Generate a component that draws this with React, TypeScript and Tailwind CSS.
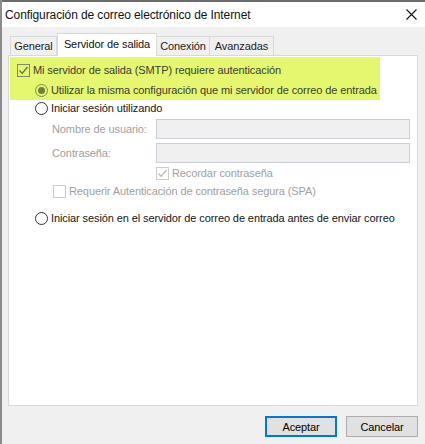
import React from 'react';

const font = { fontFamily: '"Liberation Sans", Arial, sans-serif' };

function Check({ checked, disabled }: { checked?: boolean; disabled?: boolean }) {
  return (
    <span
      className={`flex h-[13px] w-[13px] shrink-0 items-center justify-center border ${
        disabled ? 'border-[#cccccc] bg-white' : 'border-[#7f8873] bg-transparent'
      }`}
    >
      {checked && (
        <svg width="11" height="11" viewBox="0 0 11 11">
          <path
            d="M1.5 5.5 L4.2 8.3 L9.5 2"
            fill="none"
            stroke={disabled ? '#b5b5b5' : '#5d6a55'}
            strokeWidth="1.2"
          />
        </svg>
      )}
    </span>
  );
}

function Radio({ checked }: { checked?: boolean }) {
  return (
    <span
      className={`flex h-[13px] w-[13px] shrink-0 items-center justify-center rounded-full border ${
        checked ? 'border-[#7c8a5a]' : 'border-[#333333] bg-white'
      }`}
    >
      {checked && <span className="h-[7px] w-[7px] rounded-full bg-[#6f7e45]" />}
    </span>
  );
}

export default function App() {
  return (
    <div
      className="flex h-[444px] w-[425px] flex-col overflow-hidden border-l-2 border-[#8c8c8c] bg-[#f0f0f0] text-[11px] leading-[16px] tracking-[-0.1px] text-[#161616]"
      style={font}
    >
      <div className="h-[2px] bg-[#6b6b6b]" />
      <div className="flex h-[25px] items-center justify-between bg-white pl-[3px] pr-[8px]">
        <span className="text-[12px] text-[#111]">Configuración de correo electrónico de Internet</span>
        <svg width="11" height="11" viewBox="0 0 11 11">
          <path d="M0.5 0.5 L10.5 10.5 M10.5 0.5 L0.5 10.5" stroke="#111" strokeWidth="1.1" />
        </svg>
      </div>

      <div className="flex flex-col pl-[6px] pr-[7px] pt-[6px]">
        {/* tabs */}
        <div className="flex items-end">
          <div className="ml-[2px] flex h-[19px] w-[47px] items-center justify-center border border-b-0 border-[#d9d9d9] bg-[#f0f0f0] text-[#222]">
            General
          </div>
          <div className="relative z-10 -mb-px flex h-[23px] w-[100px] items-center justify-center border border-b-0 border-[#d9d9d9] bg-white pb-[3px] text-[#111]">
            Servidor de salida
          </div>
          <div className="flex h-[19px] w-[53px] items-center justify-center border border-b-0 border-l-0 border-[#d9d9d9] bg-[#f0f0f0] text-[#222]">
            Conexión
          </div>
          <div className="flex h-[19px] w-[64px] items-center justify-center border border-b-0 border-l-0 border-[#d9d9d9] bg-[#f0f0f0] text-[#222]">
            Avanzadas
          </div>
        </div>

        {/* panel */}
        <div className="flex h-[351px] flex-col border border-[#d9d9d9] bg-white">
          <div className="ml-[1px] mt-[1px] flex h-[43px] w-[370px] flex-col bg-[#e4f76f] pl-[7px] pt-[5px] text-[#3a3e33]">
            <div className="flex h-[16px] items-center gap-[3px]">
              <Check checked />
              <span>Mi servidor de salida (SMTP) requiere autenticación</span>
            </div>
            <div className="mt-[4px] flex h-[16px] items-center gap-[3px] pl-[18px]">
              <Radio checked />
              <span>Utilizar la misma configuración que mi servidor de correo de entrada</span>
            </div>
          </div>

          <div className="flex flex-col pl-[26px] pr-[7px]">
            <div className="flex h-[16px] items-center gap-[3px]">
              <Radio />
              <span>Iniciar sesión utilizando</span>
            </div>

            <div className="flex flex-col pl-[17px] text-[#a0a0a0]">
              <div className="mt-[3px] flex h-[20px] items-center">
                <span className="w-[104px]">Nombre de usuario:</span>
                <div className="h-[20px] flex-1 border border-[#c8ced6] bg-[#f0f0f0]" />
              </div>
              <div className="mt-[4px] flex h-[20px] items-center">
                <span className="w-[104px]">Contraseña:</span>
                <div className="h-[20px] flex-1 border border-[#c8ced6] bg-[#f0f0f0]" />
              </div>
              <div className="mt-[2px] flex h-[16px] items-center gap-[3px] pl-[104px]">
                <Check checked disabled />
                <span>Recordar contraseña</span>
              </div>
              <div className="mt-[2px] flex h-[16px] items-center gap-[3px] pl-[1px]">
                <Check disabled />
                <span>Requerir Autenticación de contraseña segura (SPA)</span>
              </div>
            </div>

            <div className="mt-[11px] flex h-[16px] items-center gap-[3px]">
              <Radio />
              <span>Iniciar sesión en el servidor de correo de entrada antes de enviar correo</span>
            </div>
          </div>
        </div>

        {/* buttons */}
        <div className="mt-[10px] flex justify-end gap-[9px]">
          <button
            type="button"
            className="h-[21px] w-[72px] border-2 border-[#0078d7] bg-[#e1e1e1] text-[11px] text-black"
          >
            Aceptar
          </button>
          <button
            type="button"
            className="h-[21px] w-[72px] border border-[#adadad] bg-[#e1e1e1] text-[11px] text-black"
          >
            Cancelar
          </button>
        </div>
      </div>
    </div>
  );
}
